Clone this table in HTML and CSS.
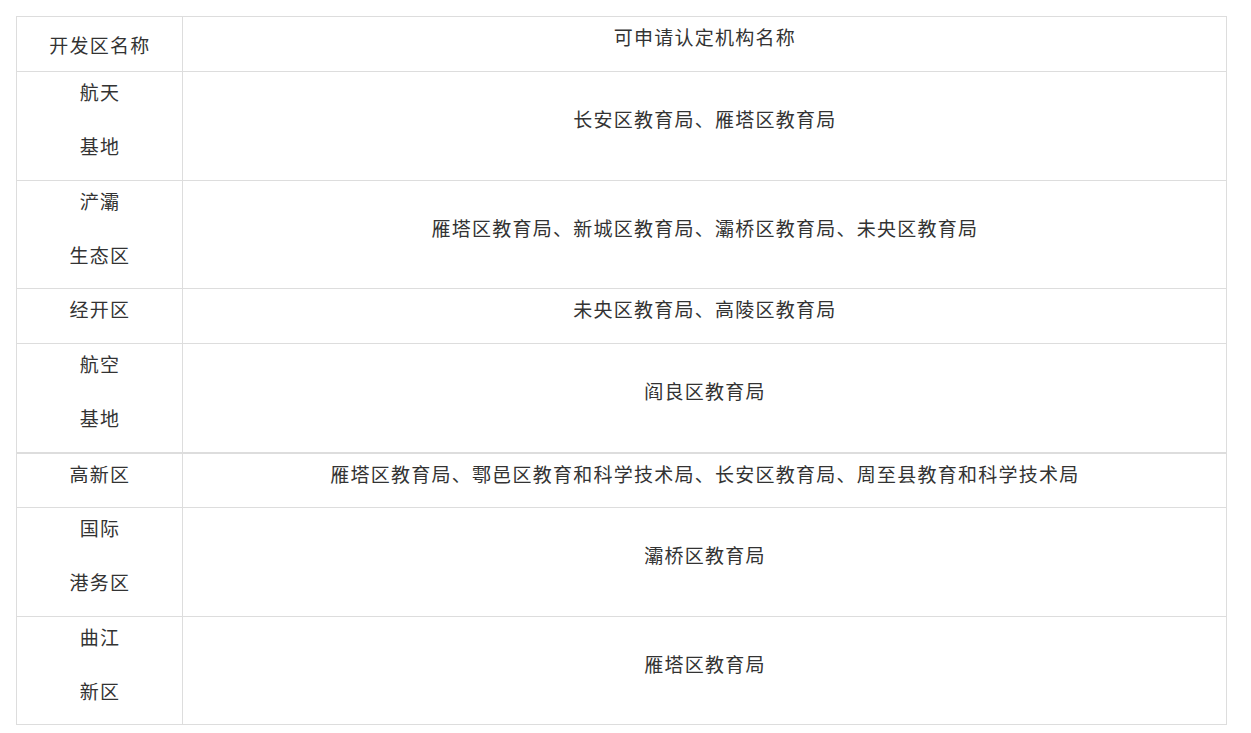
FILE: index.html
```html
<!DOCTYPE html>
<html lang="zh-CN">
<head>
    <meta charset="UTF-8">
    <meta name="viewport" content="width=device-width, initial-scale=1.0">
    <title>开发区可申请认定机构</title>
    <link rel="stylesheet" href="styles.css">
</head>
<body>
    <table class="zone-table">
        <colgroup>
            <col class="col-zone">
            <col class="col-org">
        </colgroup>
        <tr>
            <td class="head-zone"><p>开发区名称</p></td>
            <td class="head-org"><p>可申请认定机构名称</p></td>
        </tr>
        <tr class="tall">
            <td class="zone"><p>航天</p><p>基地</p></td>
            <td class="org"><p>长安区教育局、雁塔区教育局</p></td>
        </tr>
        <tr class="tall">
            <td class="zone"><p>浐灞</p><p>生态区</p></td>
            <td class="org"><p>雁塔区教育局、新城区教育局、灞桥区教育局、未央区教育局</p></td>
        </tr>
        <tr>
            <td class="zone"><p>经开区</p></td>
            <td class="org"><p>未央区教育局、高陵区教育局</p></td>
        </tr>
        <tr class="tall">
            <td class="zone"><p>航空</p><p>基地</p></td>
            <td class="org"><p>阎良区教育局</p></td>
        </tr>
        <tr class="split">
            <td class="zone"><p>高新区</p></td>
            <td class="org"><p>雁塔区教育局、鄠邑区教育和科学技术局、长安区教育局、周至县教育和科学技术局</p></td>
        </tr>
        <tr class="tall">
            <td class="zone"><p>国际</p><p>港务区</p></td>
            <td class="org"><p>灞桥区教育局</p></td>
        </tr>
        <tr class="tall">
            <td class="zone"><p>曲江</p><p>新区</p></td>
            <td class="org"><p>雁塔区教育局</p></td>
        </tr>
    </table>
</body>
</html>
```

FILE: styles.css
```css
body {
    margin: 0;
    padding: 16px;
    background: #fff;
    color: #333;
    font-family: "Noto Sans CJK SC", "Noto Sans", sans-serif;
    font-size: 19px;
}
.zone-table {
    border-collapse: collapse;
    table-layout: fixed;
    width: 1211px;
}
.col-zone {
    width: 166px;
}
.zone-table td {
    border: 1px solid #ddd;
    padding: 8px 8px 22px 9px;
    text-align: center;
}
.zone-table p {
    margin: 0;
    line-height: 24px;
    letter-spacing: 1.25px;
}
.zone-table p + p {
    margin-top: 30px;
}
.zone {
    vertical-align: top;
}
.org {
    vertical-align: middle;
}
.zone-table .tall td {
    padding-bottom: 21.6px;
}
.head-zone {
    vertical-align: top;
}
.zone-table .head-zone {
    padding-top: 16px;
    padding-bottom: 14px;
}
.head-org {
    vertical-align: top;
}
.zone-table .split td {
    border-top: 2px solid #ddd;
    padding-top: 8px;
    padding-bottom: 21.5px;
}
```
